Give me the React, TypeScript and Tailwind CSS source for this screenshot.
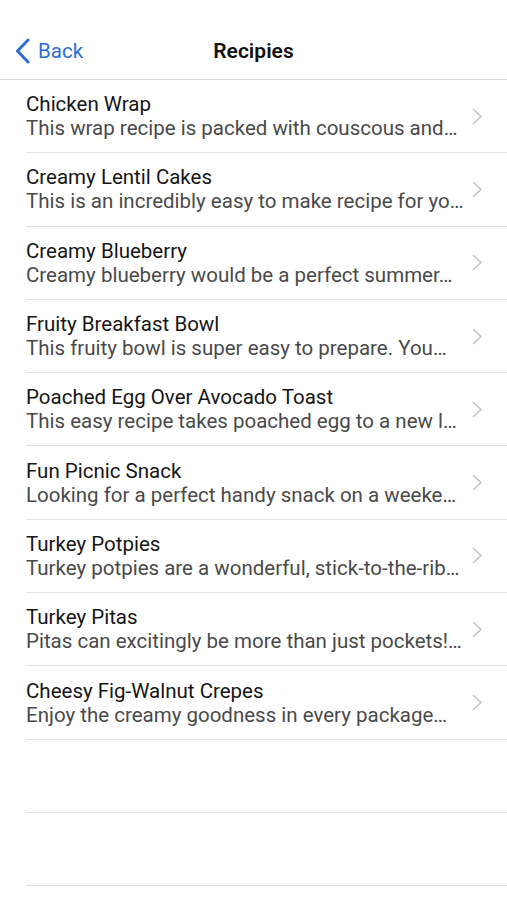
import React from "react";

const recipes = [
  { t: "Chicken Wrap", d: "This wrap recipe is packed with couscous and…" },
  { t: "Creamy Lentil Cakes", d: "This is an incredibly easy to make recipe for yo…" },
  { t: "Creamy Blueberry", d: "Creamy blueberry would be a perfect summer…" },
  { t: "Fruity Breakfast Bowl", d: "This fruity bowl is super easy to prepare. You…" },
  { t: "Poached Egg Over Avocado Toast", d: "This easy recipe takes poached egg to a new l…" },
  { t: "Fun Picnic Snack", d: "Looking for a perfect handy snack on a weeke…" },
  { t: "Turkey Potpies", d: "Turkey potpies are a wonderful, stick-to-the-rib…" },
  { t: "Turkey Pitas", d: "Pitas can excitingly be more than just pockets!…" },
  { t: "Cheesy Fig-Walnut Crepes", d: "Enjoy the creamy goodness in every package…" },
];

function Chevron() {
  return (
    <svg width="11" height="17" viewBox="0 0 11 17" fill="none">
      <path d="M1.5 1.5 L9 8.5 L1.5 15.5" stroke="#c4c4c8" strokeWidth="1.6" strokeLinecap="round" strokeLinejoin="round" />
    </svg>
  );
}

export default function App() {
  return (
    <div className="w-[507px] h-[900px] bg-white overflow-hidden" style={{ fontFamily: "Roboto, 'Noto Sans', sans-serif" }}>
      <div className="relative h-[80px] border-b border-[#d9d9d9] flex items-end justify-center pb-[15px]">
        <div className="absolute left-[14px] top-[38px] flex items-center gap-[6px] text-[#2c6ed6]">
          <svg width="18" height="26" viewBox="0 0 18 26" fill="none">
            <path d="M14 2 L3.5 13 L14 24" stroke="#2c6ed6" strokeWidth="3" strokeLinecap="round" strokeLinejoin="round" />
          </svg>
          <span className="text-[20.5px] leading-[26px]">Back</span>
        </div>
        <span className="text-[21px] font-semibold text-[#111] leading-[26px]">Recipies</span>
      </div>
      <div className="flex flex-col">
        {recipes.map((r) => (
          <div key={r.t} className="h-[73.3px] pl-[26px] flex">
            <div className="flex-1 flex items-center border-b border-[#e2e2e2] pr-[24px] min-w-0">
              <div className="flex-1 min-w-0 pr-[8px]">
                <div className="text-[20.5px] leading-[24px] text-[#161616] whitespace-nowrap">{r.t}</div>
                <div className="text-[20.5px] leading-[24px] text-[#4a4a4a] whitespace-nowrap">{r.d}</div>
              </div>
              <Chevron />
            </div>
          </div>
        ))}
        <div className="h-[73.3px] pl-[26px] flex">
          <div className="flex-1 border-b border-[#e2e2e2]" />
        </div>
        <div className="h-[73.3px] pl-[26px] flex">
          <div className="flex-1 border-b border-[#e2e2e2]" />
        </div>
      </div>
    </div>
  );
}
